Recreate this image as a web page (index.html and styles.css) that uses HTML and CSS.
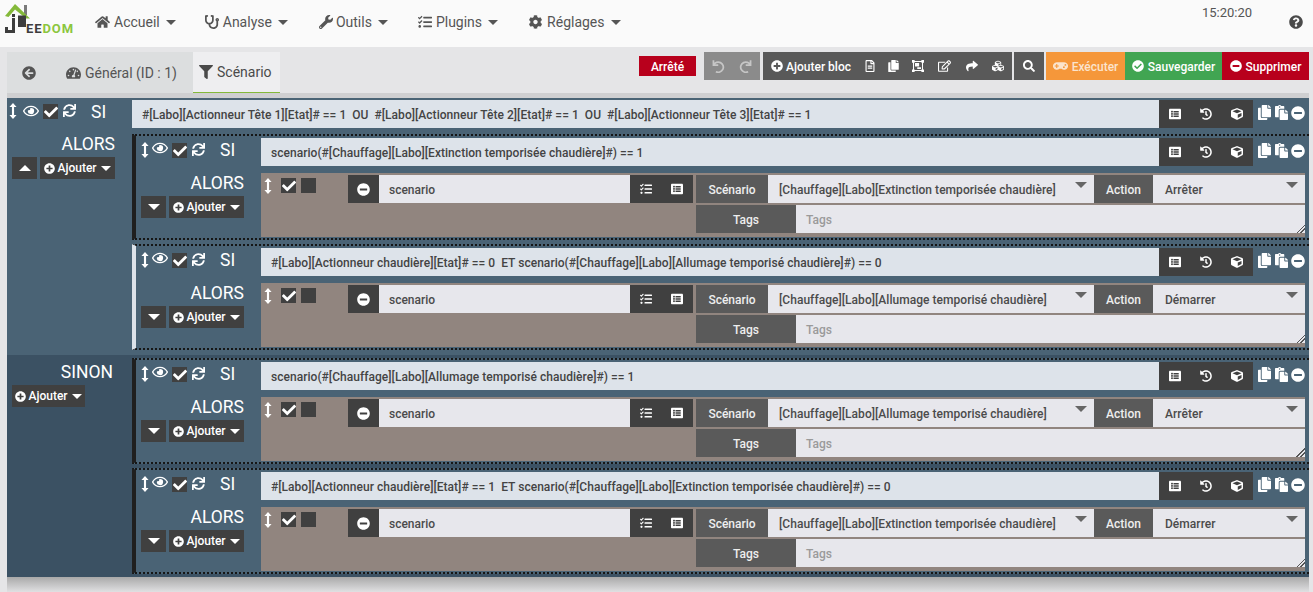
FILE: index.html
```html
<!DOCTYPE html>
<html lang="fr">
<head>
<meta charset="utf-8">
<title>Jeedom - Scénario</title>
<link rel="stylesheet" href="styles.css">
</head>
<body>
<svg class="defs" aria-hidden="true">
<symbol id="home" viewBox="0 0 576 512"><path d="M280.37 148.26L96 300.11V464a16 16 0 0 0 16 16l112.06-.29a16 16 0 0 0 15.92-16V368a16 16 0 0 1 16-16h64a16 16 0 0 1 16 16v95.64a16 16 0 0 0 16 16.05L464 480a16 16 0 0 0 16-16V300L295.67 148.26a12.19 12.19 0 0 0-15.3 0zM571.6 251.47L488 182.56V44.05a12 12 0 0 0-12-12h-56a12 12 0 0 0-12 12v72.61L318.47 43a48 48 0 0 0-61 0L4.34 251.47a12 12 0 0 0-1.6 16.9l25.5 31A12 12 0 0 0 45.15 301l235.22-193.74a12.19 12.19 0 0 1 15.3 0L530.9 301a12 12 0 0 0 16.9-1.6l25.5-31a12 12 0 0 0-1.7-16.93z"/></symbol>
<symbol id="steth" viewBox="0 0 512 512"><path d="M447.1 112c-34.2.5-62.3 28.4-63 62.6-.5 24.3 12.5 45.6 32 56.8V344c0 57.3-50.2 104-112 104-60 0-109.2-44.1-111.9-99.2C265 333.8 320 269.2 320 192V36.6c0-11.4-8.1-21.3-19.3-23.5L237.8.5c-13-2.6-25.6 5.8-28.2 18.8L206.4 35c-2.6 13 5.8 25.6 18.8 28.2l30.7 6.1v121.4c0 52.9-42.2 96.7-95.1 97.2-53.4.5-96.9-42.7-96.9-96V69.4l30.7-6.1c13-2.6 21.4-15.2 18.8-28.2l-3.1-15.7C107.7 6.4 95.1-2 82.1.6L19.3 13C8.1 15.3 0 25.1 0 36.6V192c0 77.3 55.1 142 128.1 156.8C130.7 439.2 208.6 512 304 512c97 0 176-75.4 176-168V231.4c19.1-11.1 32-31.7 32-55.4 0-35.7-29.2-64.5-64.9-64zm.9 80c-8.8 0-16-7.2-16-16s7.2-16 16-16 16 7.2 16 16-7.2 16-16 16z"/></symbol>
<symbol id="wrench" viewBox="0 0 512 512"><path d="M507.73 109.1c-2.24-9.03-13.54-12.09-20.12-5.51l-74.36 74.36-67.88-11.31-11.31-67.88 74.36-74.36c6.62-6.62 3.43-17.9-5.66-20.16-47.38-11.74-99.55.91-136.58 37.93-39.64 39.64-50.55 97.1-34.05 147.2L18.74 402.76c-24.99 24.99-24.99 65.51 0 90.5 24.99 24.99 65.51 24.99 90.5 0l213.21-213.21c50.12 16.71 107.47 5.68 147.37-34.22 37.07-37.07 49.7-89.32 37.91-136.73zM64 472c-13.25 0-24-10.75-24-24 0-13.26 10.75-24 24-24s24 10.74 24 24c0 13.25-10.75 24-24 24z"/></symbol>
<symbol id="tasks" viewBox="0 0 512 512"><path d="M139.61 35.5a12 12 0 0 0-17 0L58.93 98.81l-22.7-22.12a12 12 0 0 0-17 0L3.53 92.41a12 12 0 0 0 0 17l47.59 47.4a12.78 12.78 0 0 0 17.61 0l15.59-15.62L156.52 69a12.09 12.09 0 0 0 .09-17zm0 159.19a12 12 0 0 0-17 0l-63.68 63.72-22.7-22.1a12 12 0 0 0-17 0L3.53 252a12 12 0 0 0 0 17L51 316.5a12.77 12.77 0 0 0 17.6 0l15.7-15.69 72.2-72.22a12 12 0 0 0 .09-16.9zM64 368c-26.49 0-48.59 21.5-48.59 48S37.53 464 64 464a48 48 0 0 0 0-96zm432 16H208a16 16 0 0 0-16 16v32a16 16 0 0 0 16 16h288a16 16 0 0 0 16-16v-32a16 16 0 0 0-16-16zm0-320H208a16 16 0 0 0-16 16v32a16 16 0 0 0 16 16h288a16 16 0 0 0 16-16V80a16 16 0 0 0-16-16zm0 160H208a16 16 0 0 0-16 16v32a16 16 0 0 0 16 16h288a16 16 0 0 0 16-16v-32a16 16 0 0 0-16-16z"/></symbol>
<symbol id="cog" viewBox="0 0 512 512"><path d="M487.4 315.7l-42.6-24.6c4.3-23.2 4.3-47 0-70.2l42.6-24.6c4.9-2.8 7.1-8.6 5.5-14-11.1-35.6-30-67.8-54.7-94.6-3.8-4.1-10-5.1-14.8-2.3L380.8 110c-17.9-15.4-38.5-27.3-60.8-35.1V25.8c0-5.6-3.9-10.5-9.4-11.7-36.7-8.2-74.3-7.8-109.2 0-5.5 1.2-9.4 6.1-9.4 11.7V75c-22.2 7.9-42.8 19.8-60.8 35.1L88.7 85.5c-4.9-2.8-11-1.9-14.8 2.3-24.7 26.7-43.6 58.9-54.7 94.6-1.7 5.4.6 11.2 5.5 14L67.3 221c-4.3 23.2-4.3 47 0 70.2l-42.6 24.6c-4.9 2.8-7.1 8.6-5.5 14 11.1 35.6 30 67.8 54.7 94.6 3.8 4.1 10 5.1 14.8 2.3l42.6-24.6c17.9 15.4 38.5 27.3 60.8 35.1v49.2c0 5.6 3.9 10.5 9.4 11.7 36.7 8.2 74.3 7.8 109.2 0 5.5-1.2 9.4-6.1 9.4-11.7v-49.2c22.2-7.9 42.8-19.8 60.8-35.1l42.6 24.6c4.9 2.8 11 1.9 14.8-2.3 24.7-26.7 43.6-58.9 54.7-94.6 1.5-5.5-.7-11.3-5.6-14.1zM256 336c-44.1 0-80-35.9-80-80s35.9-80 80-80 80 35.9 80 80-35.9 80-80 80z"/></symbol>
<symbol id="question" viewBox="0 0 512 512"><path d="M504 256c0 136.997-111.043 248-248 248S8 392.997 8 256C8 119.083 119.043 8 256 8s248 111.083 248 248zM262.655 90c-54.497 0-89.255 22.957-116.549 63.758-3.536 5.286-2.353 12.415 2.715 16.258l34.699 26.31c5.205 3.947 12.621 3.008 16.665-2.122 17.864-22.658 30.113-35.797 57.303-35.797 20.429 0 45.698 13.148 45.698 32.958 0 14.976-12.363 22.667-32.534 33.976C247.128 238.528 216 254.941 216 296v4c0 6.627 5.373 12 12 12h56c6.627 0 12-5.373 12-12v-1.333c0-28.462 83.186-29.647 83.186-106.667 0-58.002-60.165-102-116.531-102zM256 338c-25.365 0-46 20.635-46 46 0 25.364 20.635 46 46 46s46-20.636 46-46c0-25.365-20.635-46-46-46z"/></symbol>
<symbol id="back" viewBox="0 0 512 512"><path d="M256 504C119 504 8 393 8 256S119 8 256 8s248 111 248 248-111 248-248 248zm28.9-143.6L209.4 288H392c13.3 0 24-10.7 24-24v-16c0-13.3-10.7-24-24-24H209.4l75.5-72.4c9.7-9.3 9.9-24.8.4-34.3l-11-10.9c-9.4-9.4-24.6-9.4-33.9 0L107.7 239c-9.4 9.4-9.4 24.6 0 33.9l132.7 132.7c9.4 9.4 24.6 9.4 33.9 0l11-10.9c9.5-9.5 9.3-25-.4-34.3z"/></symbol>
<symbol id="gauge" viewBox="0 0 576 512"><path d="M288 32C128.94 32 0 160.94 0 320c0 52.8 14.25 102.26 39.06 144.8 5.61 9.62 16.3 15.2 27.44 15.2h443c11.14 0 21.83-5.58 27.44-15.2C561.75 422.26 576 372.8 576 320c0-159.06-128.94-288-288-288zm0 64c14.71 0 26.58 10.13 30.32 23.65-1.11 2.26-2.64 4.23-3.45 6.67l-9.22 27.67c-5.13 3.49-10.97 6.01-17.64 6.01-17.67 0-32-14.33-32-32S270.33 96 288 96zM96 384c-17.67 0-32-14.33-32-32s14.33-32 32-32 32 14.33 32 32-14.33 32-32 32zm48-160c-17.67 0-32-14.33-32-32s14.33-32 32-32 32 14.33 32 32-14.33 32-32 32zm246.77-72.41l-61.33 184C343.13 347.33 352 364.54 352 384c0 11.72-3.38 22.55-8.88 32H232.88c-5.5-9.45-8.88-20.28-8.88-32 0-33.94 26.5-61.43 59.9-63.59l61.34-184.01c4.17-12.56 17.73-19.45 30.36-15.17 12.57 4.19 19.35 17.79 15.17 30.36zm14.66 57.2l15.52-46.55c3.47-1.29 7.13-2.23 11.05-2.23 17.67 0 32 14.33 32 32s-14.33 32-32 32c-11.38-.01-20.89-6.28-26.57-15.22zM480 384c-17.67 0-32-14.33-32-32s14.33-32 32-32 32 14.33 32 32-14.33 32-32 32z"/></symbol>
<symbol id="filter" viewBox="0 0 512 512"><path d="M487.976 0H24.028C2.71 0-8.047 25.866 7.058 40.971L192 225.941V432c0 7.831 3.821 15.17 10.237 19.662l80 55.98C298.02 518.69 320 507.493 320 487.98V225.941l184.947-184.97C520.021 25.896 509.338 0 487.976 0z"/></symbol>
<symbol id="undo" viewBox="0 0 16 16"><path fill="none" stroke="currentColor" stroke-width="2" d="M2.800 1.500v5.500h5.500M3 7a5.800 5.800 0 1 1 2.600 7.500"/></symbol>
<symbol id="redo" viewBox="0 0 16 16"><path fill="none" stroke="currentColor" stroke-width="2" d="M13.200 1.500v5.500h-5.500M13 7a5.800 5.800 0 1 0-2.600 7.500"/></symbol>
<symbol id="plus" viewBox="0 0 512 512"><path d="M256 8C119 8 8 119 8 256s111 248 248 248 248-111 248-248S393 8 256 8zm144 276c0 6.6-5.4 12-12 12h-92v92c0 6.6-5.4 12-12 12h-56c-6.6 0-12-5.4-12-12v-92h-92c-6.6 0-12-5.4-12-12v-56c0-6.6 5.4-12 12-12h92v-92c0-6.6 5.4-12 12-12h56c6.6 0 12 5.4 12 12v92h92c6.6 0 12 5.4 12 12v56z"/></symbol>
<symbol id="minus" viewBox="0 0 512 512"><path d="M256 8C119 8 8 119 8 256s111 248 248 248 248-111 248-248S393 8 256 8zM124 296c-6.6 0-12-5.4-12-12v-56c0-6.6 5.4-12 12-12h264c6.6 0 12 5.4 12 12v56c0 6.6-5.4 12-12 12H124z"/></symbol>
<symbol id="okcircle" viewBox="0 0 512 512"><path d="M504 256c0 136.967-111.033 248-248 248S8 392.967 8 256 119.033 8 256 8s248 111.033 248 248zM227.314 387.314l184-184c6.248-6.248 6.248-16.379 0-22.627l-22.627-22.627c-6.248-6.249-16.379-6.249-22.628 0L216 308.118l-70.059-70.059c-6.248-6.248-16.379-6.248-22.628 0l-22.627 22.627c-6.248 6.248-6.248 16.379 0 22.627l104 104c6.249 6.249 16.379 6.249 22.628.001z"/></symbol>
<symbol id="file" viewBox="0 0 384 512"><path d="M288 248v28c0 6.6-5.4 12-12 12H108c-6.6 0-12-5.4-12-12v-28c0-6.6 5.4-12 12-12h168c6.6 0 12 5.4 12 12zm-12 72H108c-6.6 0-12 5.4-12 12v28c0 6.6 5.4 12 12 12h168c6.6 0 12-5.4 12-12v-28c0-6.6-5.4-12-12-12zm108-188.1V464c0 26.5-21.5 48-48 48H48c-26.5 0-48-21.5-48-48V48C0 21.5 21.5 0 48 0h204.1C264.8 0 277 5.1 286 14.1L369.9 98c9 8.9 14.1 21.2 14.1 33.9zm-128-80V128h76.1L256 51.9zM336 464V176H232c-13.3 0-24-10.7-24-24V48H48v416h288z"/></symbol>
<symbol id="copy" viewBox="0 0 448 512"><path d="M320 448v40c0 13.255-10.745 24-24 24H24c-13.255 0-24-10.745-24-24V120c0-13.255 10.745-24 24-24h72v296c0 30.879 25.121 56 56 56h168zm0-344V0H152c-13.255 0-24 10.745-24 24v368c0 13.255 10.745 24 24 24h272c13.255 0 24-10.745 24-24V128H344c-13.2 0-24-10.8-24-24zm120.971-31.029L375.029 7.029A24 24 0 0 0 358.059 0H352v96h96v-6.059a24 24 0 0 0-7.029-16.97z"/></symbol>
<symbol id="paste" viewBox="0 0 448 512"><path d="M128 184c0-30.879 25.122-56 56-56h136V56c0-13.255-10.745-24-24-24h-80.61C204.306 12.89 183.637 0 160 0s-44.306 12.89-55.39 32H24C10.745 32 0 42.745 0 56v336c0 13.255 10.745 24 24 24h104V184zm32-144c13.255 0 24 10.745 24 24s-10.745 24-24 24-24-10.745-24-24 10.745-24 24-24zm184 248h104v200c0 13.255-10.745 24-24 24H184c-13.255 0-24-10.745-24-24V184c0-13.255 10.745-24 24-24h136v104c0 13.2 10.8 24 24 24zm104-38.059V256h-96v-96h6.059a24 24 0 0 1 16.97 7.029l65.941 65.941a24.002 24.002 0 0 1 7.03 16.971z"/></symbol>
<symbol id="group" viewBox="0 0 16 16"><path d="M0 0h3.500v3.500H0zM12.500 0H16v3.500h-3.500zM0 12.500h3.500V16H0zM12.500 12.500H16V16h-3.500z"/><path fill="none" stroke="currentColor" stroke-width="1.400" d="M2 2h12v12H2z"/><path d="M4 4h5.500v4.500H4zM7 9.500h5V12H7z"/></symbol>
<symbol id="edit" viewBox="0 0 576 512"><path d="M402.3 344.9l32-32c5-5 13.7-1.500 13.7 5.700V464c0 26.500-21.500 48-48 48H48c-26.500 0-48-21.500-48-48V112c0-26.500 21.500-48 48-48h273.500c7.100 0 10.700 8.600 5.700 13.700l-32 32c-1.500 1.500-3.500 2.300-5.700 2.300H48v352h352V350.500c0-2.100.8-4.100 2.300-5.600zm156.600-201.800L296.300 405.700l-90.400 10c-26.200 2.900-48.500-19.200-45.600-45.600l10-90.400L432.900 17.100c22.900-22.900 59.900-22.900 82.700 0l43.200 43.200c22.900 22.900 22.900 60 .1 82.800zM460.100 174L402 115.900 216.200 301.800l-7.300 65.300 65.300-7.300L460.100 174zm64.800-79.700l-43.200-43.200c-4.100-4.100-10.800-4.100-14.800 0L436 82l58.100 58.100 30.900-30.900c4-4.200 4-10.800-.1-14.900z"/></symbol>
<symbol id="share" viewBox="0 0 512 512"><path d="M503.691 189.836L327.687 37.851C312.281 24.546 288 35.347 288 56.015v80.053C127.371 137.907 0 170.100 0 322.326c0 61.441 39.581 122.309 83.333 154.132 13.653 9.931 33.111-2.533 28.077-18.631C66.066 312.814 132.917 274.316 288 272.085V360c0 20.700 24.300 31.453 39.687 18.164l176.004-152c11.071-9.562 11.086-26.753 0-36.328z"/></symbol>
<symbol id="cubes" viewBox="0 0 512 512"><path d="M488.600 250.200L392 214V105.500c0-15-9.300-28.400-23.400-33.700l-100-37.500c-8.100-3.100-17.100-3.100-25.300 0l-100 37.500c-14.100 5.300-23.400 18.700-23.400 33.700V214l-96.600 36.200C9.300 255.500 0 268.900 0 283.900V394c0 13.600 7.700 26.100 19.900 32.200l100 50c10.100 5.100 22.100 5.100 32.200 0l103.900-52 103.900 52c10.100 5.100 22.100 5.100 32.200 0l100-50c12.200-6.100 19.900-18.600 19.900-32.200V283.900c0-15-9.300-28.400-23.400-33.700zM358 214.800l-85 31.900v-68.200l85-37v73.300zM154 104.100l102-38.200 102 38.200v.6l-102 41.400-102-41.400v-.6zm84 291.100l-85 42.500v-79.100l85-38.800v75.400zm0-112l-102 41.400-102-41.400v-.6l102-38.200 102 38.200v.6zm240 112l-85 42.500v-79.100l85-38.800v75.400zm0-112l-102 41.400-102-41.400v-.6l102-38.200 102 38.200v.6z"/></symbol>
<symbol id="search" viewBox="0 0 512 512"><path d="M505 442.700L405.300 343c-4.500-4.500-10.600-7-17-7H372c27.600-35.300 44-79.700 44-128C416 93.100 322.900 0 208 0S0 93.100 0 208s93.100 208 208 208c48.300 0 92.700-16.400 128-44v16.300c0 6.400 2.500 12.500 7 17l99.700 99.700c9.400 9.400 24.600 9.400 33.900 0l28.300-28.300c9.400-9.400 9.400-24.600.1-34zM208 336c-70.700 0-128-57.200-128-128 0-70.700 57.200-128 128-128 70.700 0 128 57.200 128 128 0 70.700-57.200 128-128 128z"/></symbol>
<symbol id="gamepad" viewBox="0 0 640 512"><path d="M480.070 96H160a160 160 0 1 0 114.240 272h91.520A160 160 0 1 0 480.070 96zM248 268a12 12 0 0 1-12 12h-52v52a12 12 0 0 1-12 12h-24a12 12 0 0 1-12-12v-52H84a12 12 0 0 1-12-12v-24a12 12 0 0 1 12-12h52v-52a12 12 0 0 1 12-12h24a12 12 0 0 1 12 12v52h52a12 12 0 0 1 12 12zm216 76a40 40 0 1 1 40-40 40 40 0 0 1-40 40zm64-96a40 40 0 1 1 40-40 40 40 0 0 1-40 40z"/></symbol>
<symbol id="grip" viewBox="0 0 8 18"><path d="M4 0l4 4.500H5.200v9H8L4 18 0 13.500h2.800v-9H0z"/></symbol>
<symbol id="eye" viewBox="0 0 576 512"><path d="M288 144a110.940 110.940 0 0 0-31.240 5 55.400 55.400 0 0 1 7.240 27 56 56 0 0 1-56 56 55.400 55.400 0 0 1-27-7.240A111.710 111.710 0 1 0 288 144zm284.520 97.400C518.290 135.590 410.930 64 288 64S57.680 135.640 3.480 241.410a32.350 32.350 0 0 0 0 29.190C57.710 376.410 165.070 448 288 448s230.320-71.640 284.520-177.410a32.350 32.350 0 0 0 0-29.190zM288 400c-98.650 0-189.090-55-237.930-144C98.910 167 189.340 112 288 112s189.090 55 237.930 144C477.100 345 386.660 400 288 400z"/></symbol>
<symbol id="check" viewBox="0 0 512 512"><path d="M173.898 439.404l-166.400-166.400c-9.997-9.997-9.997-26.206 0-36.204l36.203-36.204c9.997-9.998 26.207-9.998 36.204 0L192 312.690 432.095 72.596c9.997-9.997 26.207-9.997 36.204 0l36.203 36.204c9.997 9.997 9.997 26.206 0 36.204l-294.400 294.401c-9.998 9.997-26.207 9.997-36.204-.001z"/></symbol>
<symbol id="sync" viewBox="0 0 512 512"><path d="M440.650 12.570l4 82.770A247.160 247.160 0 0 0 255.830 8C134.730 8 33.910 94.920 12.290 209.820A12 12 0 0 0 24.090 224h49.050a12 12 0 0 0 11.670-9.260 175.910 175.910 0 0 1 317-56.940l-101.460-4.860a12 12 0 0 0-12.570 12v47.410a12 12 0 0 0 12 12H500a12 12 0 0 0 12-12V12a12 12 0 0 0-12-12h-47.370a12 12 0 0 0-11.980 12.570zM255.830 432a175.610 175.610 0 0 1-146-77.800l101.800 4.870a12 12 0 0 0 12.570-12v-47.400a12 12 0 0 0-12-12H12a12 12 0 0 0-12 12V500a12 12 0 0 0 12 12h47.350a12 12 0 0 0 12-12.600l-4.150-82.570A247.170 247.170 0 0 0 255.830 504c121.110 0 221.930-86.920 243.550-201.820a12 12 0 0 0-11.800-14.180h-49.050a12 12 0 0 0-11.670 9.260A175.860 175.860 0 0 1 255.830 432z"/></symbol>
<symbol id="listalt" viewBox="0 0 512 512"><path d="M464 480H48c-26.510 0-48-21.490-48-48V80c0-26.510 21.490-48 48-48h416c26.510 0 48 21.490 48 48v352c0 26.510-21.490 48-48 48zM128 120c-22.091 0-40 17.909-40 40s17.909 40 40 40 40-17.909 40-40-17.909-40-40-40zm0 96c-22.091 0-40 17.909-40 40s17.909 40 40 40 40-17.909 40-40-17.909-40-40-40zm0 96c-22.091 0-40 17.909-40 40s17.909 40 40 40 40-17.909 40-40-17.909-40-40-40zm288-136v-32c0-6.627-5.373-12-12-12H204c-6.627 0-12 5.373-12 12v32c0 6.627 5.373 12 12 12h200c6.627 0 12-5.373 12-12zm0 96v-32c0-6.627-5.373-12-12-12H204c-6.627 0-12 5.373-12 12v32c0 6.627 5.373 12 12 12h200c6.627 0 12-5.373 12-12zm0 96v-32c0-6.627-5.373-12-12-12H204c-6.627 0-12 5.373-12 12v32c0 6.627 5.373 12 12 12h200c6.627 0 12-5.373 12-12z"/></symbol>
<symbol id="history" viewBox="0 0 512 512"><path d="M504 255.531c.253 136.640-111.180 248.372-247.820 248.468-59.015.042-113.223-20.530-155.822-54.911-11.077-8.940-11.905-25.541-1.839-35.607l11.267-11.267c8.609-8.609 22.353-9.551 31.891-1.984C173.062 425.135 212.781 440 256 440c101.705 0 184-82.311 184-184 0-101.705-82.311-184-184-184-48.814 0-93.149 18.969-126.068 49.932l50.754 50.754c10.080 10.080 2.941 27.314-11.313 27.314H24c-8.837 0-16-7.163-16-16V38.627c0-14.254 17.234-21.393 27.314-11.314l49.372 49.372C129.209 34.136 189.552 8 256 8c136.810 0 247.747 110.780 248 247.531zm-180.912 78.784l9.823-12.630c8.138-10.463 6.253-25.542-4.210-33.679L288 256.349V152c0-13.255-10.745-24-24-24h-16c-13.255 0-24 10.745-24 24v135.651l65.409 50.874c10.463 8.137 25.541 6.253 33.679-4.210z"/></symbol>
<symbol id="cube" viewBox="0 0 512 512"><path d="M239.100 6.300l-208 78c-18.700 7-31.100 25-31.100 45v225.100c0 18.200 10.300 34.800 26.500 42.900l208 104c13.500 6.800 29.400 6.800 42.900 0l208-104c16.300-8.100 26.500-24.800 26.500-42.900V129.300c0-20-12.400-37.900-31.100-44.900l-208-78C262 2.200 250 2.200 239.100 6.300zM256 68.400l192 72v1.100l-192 78-192-78v-1.100l192-72zm32 356V275.500l160-65v133.900l-160 80z"/></symbol>
</svg>

<header class="nav">
  <a class="logo">
    <svg class="logo-mark" viewBox="0 0 30 34" aria-hidden="true">
      <path class="logo-chim" d="M24 5h3v10h-3z"/>
      <path class="logo-green" d="M5 16L15 4l15 14.500h-4L15 9.500 8.500 17z"/>
      <path class="logo-dark" d="M18 15.500h8V27h-8z"/>
      <path class="logo-dark" d="M12 14h3v3h-3zM12 18h3v15H5v-6h3v3h4z"/>
    </svg>
    <span class="logo-text"><span class="logo-ee">EE</span><span class="logo-dom">DOM</span></span>
  </a>
  <nav class="menu">
    <a class="menu-item m-home"><svg class="i i-nav"><use href="#home"/></svg>Accueil<span class="caret caret-nav"></span></a>
    <a class="menu-item m-ana"><svg class="i i-nav i-nav-s"><use href="#steth"/></svg>Analyse<span class="caret caret-nav"></span></a>
    <a class="menu-item m-out"><svg class="i i-nav i-nav-w"><use href="#wrench"/></svg>Outils<span class="caret caret-nav"></span></a>
    <a class="menu-item m-plu"><svg class="i i-nav i-nav-s"><use href="#tasks"/></svg>Plugins<span class="caret caret-nav"></span></a>
    <a class="menu-item"><svg class="i i-nav"><use href="#cog"/></svg>Réglages<span class="caret caret-nav"></span></a>
  </nav>
  <div class="nav-right">
    <span class="clock">15:20:20</span>
    <svg class="i i-help"><use href="#question"/></svg>
  </div>
</header>

<main class="main">
  <div class="tabbar">
    <div class="tabs-left">
      <a class="tab-back"><svg class="i i-tab"><use href="#back"/></svg></a>
      <a class="tab"><svg class="i i-gauge"><use href="#gauge"/></svg>Général (ID : 1)</a>
    </div>
    <a class="tab tab-active"><svg class="i i-tab i-filter"><use href="#filter"/></svg>Scénario</a>
    <div class="toolbar">
      <span class="state">Arrêté</span>
      <div class="tg tg-undo">
        <svg class="i i-undo"><use href="#undo"/></svg>
        <svg class="i i-undo"><use href="#redo"/></svg>
      </div>
      <div class="tg tg-main">
        <span class="tb-add"><svg class="i i-tb"><use href="#plus"/></svg><span class="tb-text">Ajouter bloc</span></span>
        <svg class="i i-tb i-file"><use href="#file"/></svg>
        <svg class="i i-tb i-copy"><use href="#copy"/></svg>
        <svg class="i i-tb"><use href="#group"/></svg>
        <svg class="i i-tb i-edit"><use href="#edit"/></svg>
        <svg class="i i-tb i-share"><use href="#share"/></svg>
        <svg class="i i-tb i-cubes"><use href="#cubes"/></svg>
      </div>
      <div class="tg tg-search"><svg class="i i-tb"><use href="#search"/></svg></div>
      <div class="tb-actions">
        <a class="act act-run"><svg class="i i-game"><use href="#gamepad"/></svg><span class="tb-text">Exécuter</span></a>
        <a class="act act-save"><svg class="i i-tb"><use href="#okcircle"/></svg><span class="tb-text">Sauvegarder</span></a>
        <a class="act act-del"><svg class="i i-tb"><use href="#minus"/></svg><span class="tb-text">Supprimer</span></a>
      </div>
    </div>
  </div>

  <section class="panel">
    <div class="row row-outer">
      <div class="head head-outer">
        <svg class="i i-grip"><use href="#grip"/></svg>
        <svg class="i i-eye"><use href="#eye"/></svg>
        <span class="chk"><svg class="i i-check"><use href="#check"/></svg></span>
        <svg class="i i-sync"><use href="#sync"/></svg>
        <span class="si">SI</span>
      </div>
      <div class="cond">#[Labo][Actionneur Tête 1][Etat]# == 1  OU  #[Labo][Actionneur Tête 2][Etat]# == 1  OU  #[Labo][Actionneur Tête 3][Etat]# == 1</div>
      <div class="addon3"><svg class="i i-add"><use href="#listalt"/></svg><svg class="i i-add"><use href="#history"/></svg><svg class="i i-add"><use href="#cube"/></svg></div>
      <div class="tools"><svg class="i i-tool"><use href="#copy"/></svg><svg class="i i-tool i-paste"><use href="#paste"/></svg><svg class="i i-rm"><use href="#minus"/></svg></div>
    </div>

    <div class="sec sec-alors">
      <div class="sec-side">
        <div class="word word-outer">ALORS</div>
        <div class="btns btns-outer">
          <a class="btn btn-tog"><span class="caret caret-up"></span></a>
          <a class="btn btn-add"><svg class="i i-plus"><use href="#plus"/></svg>Ajouter<span class="caret caret-w"></span></a>
        </div>
      </div>
      <div class="sec-body">

        <article class="block">
          <div class="row">
            <div class="head">
              <svg class="i i-grip"><use href="#grip"/></svg>
              <svg class="i i-eye"><use href="#eye"/></svg>
              <span class="chk"><svg class="i i-check"><use href="#check"/></svg></span>
              <svg class="i i-sync"><use href="#sync"/></svg>
              <span class="si">SI</span>
            </div>
            <div class="cond">scenario(#[Chauffage][Labo][Extinction temporisée chaudière]#) == 1</div>
            <div class="addon3"><svg class="i i-add"><use href="#listalt"/></svg><svg class="i i-add"><use href="#history"/></svg><svg class="i i-add"><use href="#cube"/></svg></div>
            <div class="tools"><svg class="i i-tool"><use href="#copy"/></svg><svg class="i i-tool i-paste"><use href="#paste"/></svg><svg class="i i-rm"><use href="#minus"/></svg></div>
          </div>
          <div class="row-then">
            <div class="then-side">
              <div class="word">ALORS</div>
              <div class="btns">
                <a class="btn btn-tog"><span class="caret caret-dn"></span></a>
                <a class="btn btn-add"><svg class="i i-plus"><use href="#plus"/></svg>Ajouter<span class="caret caret-w"></span></a>
              </div>
            </div>
            <div class="action">
              <div class="a-row">
                <div class="a-left">
                  <svg class="i i-grip i-grip-a"><use href="#grip"/></svg>
                  <span class="chk chk-a"><svg class="i i-check"><use href="#check"/></svg></span>
                  <span class="chk chk-off"></span>
                </div>
                <a class="a-rm"><svg class="i i-rm-a"><use href="#minus"/></svg></a>
                <div class="a-name">scenario</div>
                <div class="addon2"><svg class="i i-add"><use href="#tasks"/></svg><svg class="i i-add"><use href="#listalt"/></svg></div>
                <div class="lbl lbl-sc">Scénario</div>
                <div class="sel sel-sc">[Chauffage][Labo][Extinction temporisée chaudière]<span class="caret caret-sel"></span></div>
                <div class="lbl lbl-ac">Action</div>
                <div class="sel sel-ac">Arrêter<span class="caret caret-sel"></span></div>
              </div>
              <div class="a-row a-row2">
                <div class="lbl lbl-tags">Tags</div>
                <div class="tags">Tags<span class="resize"></span></div>
              </div>
            </div>
          </div>
        </article>

        <article class="block block-sel">
          <div class="row">
            <div class="head">
              <svg class="i i-grip"><use href="#grip"/></svg>
              <svg class="i i-eye"><use href="#eye"/></svg>
              <span class="chk"><svg class="i i-check"><use href="#check"/></svg></span>
              <svg class="i i-sync"><use href="#sync"/></svg>
              <span class="si">SI</span>
            </div>
            <div class="cond">#[Labo][Actionneur chaudière][Etat]# == 0  ET scenario(#[Chauffage][Labo][Allumage temporisé chaudière]#) == 0</div>
            <div class="addon3"><svg class="i i-add"><use href="#listalt"/></svg><svg class="i i-add"><use href="#history"/></svg><svg class="i i-add"><use href="#cube"/></svg></div>
            <div class="tools"><svg class="i i-tool"><use href="#copy"/></svg><svg class="i i-tool i-paste"><use href="#paste"/></svg><svg class="i i-rm"><use href="#minus"/></svg></div>
          </div>
          <div class="row-then">
            <div class="then-side">
              <div class="word">ALORS</div>
              <div class="btns">
                <a class="btn btn-tog"><span class="caret caret-dn"></span></a>
                <a class="btn btn-add"><svg class="i i-plus"><use href="#plus"/></svg>Ajouter<span class="caret caret-w"></span></a>
              </div>
            </div>
            <div class="action">
              <div class="a-row">
                <div class="a-left">
                  <svg class="i i-grip i-grip-a"><use href="#grip"/></svg>
                  <span class="chk chk-a"><svg class="i i-check"><use href="#check"/></svg></span>
                  <span class="chk chk-off"></span>
                </div>
                <a class="a-rm"><svg class="i i-rm-a"><use href="#minus"/></svg></a>
                <div class="a-name">scenario</div>
                <div class="addon2"><svg class="i i-add"><use href="#tasks"/></svg><svg class="i i-add"><use href="#listalt"/></svg></div>
                <div class="lbl lbl-sc">Scénario</div>
                <div class="sel sel-sc">[Chauffage][Labo][Allumage temporisé chaudière]<span class="caret caret-sel"></span></div>
                <div class="lbl lbl-ac">Action</div>
                <div class="sel sel-ac">Démarrer<span class="caret caret-sel"></span></div>
              </div>
              <div class="a-row a-row2">
                <div class="lbl lbl-tags">Tags</div>
                <div class="tags">Tags<span class="resize"></span></div>
              </div>
            </div>
          </div>
        </article>

      </div>
    </div>

    <div class="sec sec-sinon">
      <div class="sec-side">
        <div class="word word-sinon">SINON</div>
        <div class="btns btns-sinon">
          <a class="btn btn-add btn-add-s"><svg class="i i-plus"><use href="#plus"/></svg>Ajouter<span class="caret caret-w"></span></a>
        </div>
      </div>
      <div class="sec-body">

        <article class="block">
          <div class="row">
            <div class="head">
              <svg class="i i-grip"><use href="#grip"/></svg>
              <svg class="i i-eye"><use href="#eye"/></svg>
              <span class="chk"><svg class="i i-check"><use href="#check"/></svg></span>
              <svg class="i i-sync"><use href="#sync"/></svg>
              <span class="si">SI</span>
            </div>
            <div class="cond">scenario(#[Chauffage][Labo][Allumage temporisé chaudière]#) == 1</div>
            <div class="addon3"><svg class="i i-add"><use href="#listalt"/></svg><svg class="i i-add"><use href="#history"/></svg><svg class="i i-add"><use href="#cube"/></svg></div>
            <div class="tools"><svg class="i i-tool"><use href="#copy"/></svg><svg class="i i-tool i-paste"><use href="#paste"/></svg><svg class="i i-rm"><use href="#minus"/></svg></div>
          </div>
          <div class="row-then">
            <div class="then-side">
              <div class="word">ALORS</div>
              <div class="btns">
                <a class="btn btn-tog"><span class="caret caret-dn"></span></a>
                <a class="btn btn-add"><svg class="i i-plus"><use href="#plus"/></svg>Ajouter<span class="caret caret-w"></span></a>
              </div>
            </div>
            <div class="action">
              <div class="a-row">
                <div class="a-left">
                  <svg class="i i-grip i-grip-a"><use href="#grip"/></svg>
                  <span class="chk chk-a"><svg class="i i-check"><use href="#check"/></svg></span>
                  <span class="chk chk-off"></span>
                </div>
                <a class="a-rm"><svg class="i i-rm-a"><use href="#minus"/></svg></a>
                <div class="a-name">scenario</div>
                <div class="addon2"><svg class="i i-add"><use href="#tasks"/></svg><svg class="i i-add"><use href="#listalt"/></svg></div>
                <div class="lbl lbl-sc">Scénario</div>
                <div class="sel sel-sc">[Chauffage][Labo][Allumage temporisé chaudière]<span class="caret caret-sel"></span></div>
                <div class="lbl lbl-ac">Action</div>
                <div class="sel sel-ac">Arrêter<span class="caret caret-sel"></span></div>
              </div>
              <div class="a-row a-row2">
                <div class="lbl lbl-tags">Tags</div>
                <div class="tags">Tags<span class="resize"></span></div>
              </div>
            </div>
          </div>
        </article>

        <article class="block">
          <div class="row">
            <div class="head">
              <svg class="i i-grip"><use href="#grip"/></svg>
              <svg class="i i-eye"><use href="#eye"/></svg>
              <span class="chk"><svg class="i i-check"><use href="#check"/></svg></span>
              <svg class="i i-sync"><use href="#sync"/></svg>
              <span class="si">SI</span>
            </div>
            <div class="cond">#[Labo][Actionneur chaudière][Etat]# == 1  ET scenario(#[Chauffage][Labo][Extinction temporisée chaudière]#) == 0</div>
            <div class="addon3"><svg class="i i-add"><use href="#listalt"/></svg><svg class="i i-add"><use href="#history"/></svg><svg class="i i-add"><use href="#cube"/></svg></div>
            <div class="tools"><svg class="i i-tool"><use href="#copy"/></svg><svg class="i i-tool i-paste"><use href="#paste"/></svg><svg class="i i-rm"><use href="#minus"/></svg></div>
          </div>
          <div class="row-then">
            <div class="then-side">
              <div class="word">ALORS</div>
              <div class="btns">
                <a class="btn btn-tog"><span class="caret caret-dn"></span></a>
                <a class="btn btn-add"><svg class="i i-plus"><use href="#plus"/></svg>Ajouter<span class="caret caret-w"></span></a>
              </div>
            </div>
            <div class="action">
              <div class="a-row">
                <div class="a-left">
                  <svg class="i i-grip i-grip-a"><use href="#grip"/></svg>
                  <span class="chk chk-a"><svg class="i i-check"><use href="#check"/></svg></span>
                  <span class="chk chk-off"></span>
                </div>
                <a class="a-rm"><svg class="i i-rm-a"><use href="#minus"/></svg></a>
                <div class="a-name">scenario</div>
                <div class="addon2"><svg class="i i-add"><use href="#tasks"/></svg><svg class="i i-add"><use href="#listalt"/></svg></div>
                <div class="lbl lbl-sc">Scénario</div>
                <div class="sel sel-sc">[Chauffage][Labo][Extinction temporisée chaudière]<span class="caret caret-sel"></span></div>
                <div class="lbl lbl-ac">Action</div>
                <div class="sel sel-ac">Démarrer<span class="caret caret-sel"></span></div>
              </div>
              <div class="a-row a-row2">
                <div class="lbl lbl-tags">Tags</div>
                <div class="tags">Tags<span class="resize"></span></div>
              </div>
            </div>
          </div>
        </article>

      </div>
    </div>
  </section>
  <div class="shade"></div>
</main>
</body>
</html>
```

FILE: styles.css
```css
* { box-sizing: border-box; }
html, body { height: 100%; }
body {
  margin: 0;
  overflow: hidden;
  background: #e5e5e7;
  font-family: Roboto, "Liberation Sans", sans-serif;
  font-size: 12px;
  color: #4b4b4b;
}
.defs { display: none; }
.i { display: block; fill: currentColor; flex: none; }

/* top navigation */
.nav {
  height: 47px;
  background: #fafafa;
  display: flex;
  align-items: flex-start;
  color: #555;
}
.logo {
  width: 95px;
  height: 47px;
  display: flex;
  align-items: flex-start;
}
.logo-mark { width: 30px; height: 34px; flex: none; }
.logo-dark { fill: #3d3d3d; }
.logo-chim { fill: #7a7a7a; }
.logo-green { fill: #84b93a; }
.logo-text {
  margin: 22px 0 0 -4px;
  font-size: 13px;
  line-height: 14px;
  font-weight: 700;
  letter-spacing: .9px;
}
.logo-ee { color: #3d3d3d; }
.logo-dom { color: #8cc63f; }
.menu { display: flex; height: 44px; }
.menu-item {
  display: flex;
  align-items: center;
  font-size: 14px;
  color: #555;
}
.m-home { margin-right: 29px; }
.m-ana { margin-right: 31px; }
.m-out { margin-right: 30px; }
.m-plu { margin-right: 30px; }
.i-nav { width: 15px; height: 14px; margin-right: 4px; }
.i-nav-s { width: 14px; }
.i-nav-w { width: 14px; margin-right: 3px; }
.nav-right {
  margin-left: auto;
  width: 111px;
  display: flex;
  flex-direction: column;
  padding-top: 5px;
}
.clock { font-size: 13px; line-height: 15px; color: #555; }
.i-help { width: 14px; height: 14px; margin: -5px 0 0 87px; color: #4a4a4a; }

.caret { display: inline-block; width: 0; height: 0; border-left: 5px solid transparent; border-right: 5px solid transparent; flex: none; }
.caret-nav { border-top: 5px solid #555; margin-left: 6px; }
.caret-w { border-top: 5px solid #fff; margin-left: 4px; }
.caret-dn { border-left-width: 6px; border-right-width: 6px; border-top: 6px solid #fff; }
.caret-up { border-left-width: 6px; border-right-width: 6px; border-bottom: 6px solid #fff; }
.caret-sel { border-left-width: 6px; border-right-width: 6px; border-top: 6px solid #666; position: absolute; right: 7px; top: 7px; }

/* tabs + toolbar */
.main { padding: 5px 4px 0 7px; }
.tabbar {
  height: 46px;
  display: flex;
  border-bottom: 5px solid #cfcfd1;
  background: #e5e5e7;
}
.tabs-left {
  width: 186px;
  background: #dcdedf;
  display: flex;
  align-items: center;
  padding-left: 15px;
  color: #555;
}
.tab-back { width: 44px; }
.tab {
  display: flex;
  align-items: center;
  font-size: 14px;
  color: #555;
}
.tab-active {
  width: 87px;
  padding-left: 6px;
  background: #eeeef0;
  border-bottom: 1px solid #84b93a;
  color: #4a4a4a;
}
.i-tab { width: 14px; height: 14px; margin-right: 4px; }
.i-filter { margin-right: 4px; }
.i-gauge { width: 15px; height: 14px; margin-right: 4px; }

.toolbar {
  margin-left: auto;
  height: 28px;
  display: flex;
  font-size: 12px;
  color: #fff;
  font-weight: 500;
}
.state {
  width: 57px;
  height: 20px;
  margin: 4px 8px 0 0;
  background: #b8001c;
  text-align: center;
  line-height: 22px;
}
.tg { display: flex; align-items: center; height: 28px; margin-right: 3px; }
.tg-undo { width: 56px; padding-left: 7px; gap: 14px; background: #8b8b8b; color: #c6c6c6; }
.i-undo { width: 14px; height: 14px; }
.tg-main { width: 249px; padding-left: 8px; gap: 13px; background: #595959; margin-right: 2px; }
.tg-search { width: 30px; justify-content: center; background: #595959; margin-right: 2px; }
.i-tb { width: 12px; height: 12px; }
.i-file { width: 10px; }
.i-copy { width: 11px; }
.i-edit { width: 13px; margin-left: 1px; }
.i-share { margin-left: 2px; }
.i-cubes { margin-left: 1px; }
.tb-add { display: flex; align-items: center; gap: 3px; margin-right: 1px; }
.tb-text { padding-top: 2px; }
.tb-actions { display: flex; }
.act { height: 28px; display: flex; align-items: center; justify-content: center; gap: 4px; }
.act-run { width: 79px; background: #f5973a; color: #fbe4cd; }
.act-save { width: 97px; background: #41a552; }
.act-del { width: 87px; background: #b8001c; }
.i-game { width: 15px; height: 12px; }

/* scenario panel */
.panel { background: #4a6375; color: #fff; height: 479px; }
.row { display: flex; height: 28px; }
.row-outer { padding-top: 2px; height: 30px; margin-bottom: 4px; }
.head {
  width: 125px;
  display: flex;
  align-items: flex-start;
  padding: 5px 0 0 5px;
  flex: none;
}
.head-outer { padding: 4px 0 0 2px; }
.i-grip { width: 8px; height: 16px; margin: -1px 2px 0 0; }
.i-eye { width: 16px; height: 16px; margin: -3px 0 0 1px; }
.head-outer .i-eye { margin: -1px 0 0 4px; }
.chk {
  width: 15px;
  height: 15px;
  background: #404040;
  margin: 0 0 0 4px;
  display: flex;
  align-items: center;
  justify-content: center;
  flex: none;
}
.i-check { width: 14px; height: 14px; }
.i-sync { width: 13px; height: 13px; margin: 0 0 0 5px; }
.si { font-size: 17.500px; line-height: 20px; margin: -3px 0 0 15px; }
.head-outer .si { margin-top: -2px; }
.cond {
  flex: 1;
  height: 28px;
  background: #dde3ea;
  color: #444;
  font-weight: 500;
  line-height: 30px;
  padding-left: 10px;
  white-space: pre;
  letter-spacing: .035px;
}
.addon3 {
  width: 94px;
  height: 28px;
  background: #404040;
  display: flex;
  align-items: center;
  justify-content: space-around;
  padding: 0 1px;
  flex: none;
}
.i-add { width: 12px; height: 12px; }
.tools {
  width: 56px;
  display: flex;
  padding: 5px 0 0 5px;
  gap: 3px;
  flex: none;
}
.i-tool { width: 13px; height: 15px; }
.i-paste { margin-left: 1px; }
.i-rm { display: block; fill: currentColor; width: 14px; height: 14px; margin-top: 1px; flex: none; }

.sec { display: flex; }
.sec-alors { height: 223px; padding-top: 2px; }
.sec-sinon { height: 222px; padding-top: 3px; background: #3b5163; }
.sec-side { width: 125px; flex: none; }
.sec-body { flex: 1; display: flex; flex-direction: column; gap: 4px; }
.word {
  font-size: 17.500px;
  line-height: 20px;
  text-align: right;
  padding-right: 17px;
  height: 20px;
}
.word-sinon { padding: 4px 19px 0 0; height: 24px; }
.btns { display: flex; justify-content: flex-end; gap: 3px; padding-right: 17px; margin-top: 3px; }
.btns-sinon { justify-content: flex-start; padding: 0 0 0 5px; }
.btn {
  height: 22px;
  background: #404040;
  display: flex;
  align-items: center;
  justify-content: center;
  font-size: 12px;
  font-weight: 500;
}
.btn-tog { width: 25px; }
.btn-add { width: 75px; }
.btn-add-s { width: 73px; }
.i-plus { width: 11px; height: 11px; margin-right: 2px; }

.block {
  height: 106px;
  background: #4a6375;
  border-top: 2px dotted #161616;
  border-bottom: 2px dotted #161616;
  border-left: 4px solid #1f1f1f;
  padding-top: 2px;
}
.block-sel { border-left-color: #dde3ea; }
.row-then { display: flex; margin-top: 7px; height: 65px; }
.then-side { width: 125px; flex: none; }
.action {
  width: 1044px;
  height: 64px;
  background: #91857f;
  padding-top: 2px;
  flex: none;
}
.a-row { display: flex; height: 28px; }
.a-row2 { margin-top: 2px; padding-left: 435px; }
.a-left {
  width: 87px;
  display: flex;
  align-items: flex-start;
  padding: 3px 0 0 3px;
  flex: none;
}
.i-grip-a { margin: 0; }
.chk-a { margin-left: 9px; }
.chk-off { margin-left: 5px; }
.a-rm {
  width: 31px;
  background: #404040;
  display: flex;
  align-items: center;
  justify-content: center;
  flex: none;
}
.i-rm-a { width: 13px; height: 13px; }
.a-name, .sel, .tags {
  background: #e7e7ec;
  color: #4b4b4b;
  font-weight: 500;
  line-height: 30px;
  padding-left: 10px;
}
.a-name { width: 251px; flex: none; }
.addon2 {
  width: 63px;
  background: #404040;
  display: flex;
  align-items: center;
  justify-content: space-around;
  margin-right: 3px;
  flex: none;
}
.lbl {
  background: #5a5a5a;
  color: #eee;
  text-align: center;
  line-height: 30px;
  font-weight: 500;
  flex: none;
}
.lbl-sc { width: 72px; }
.lbl-ac { width: 59px; }
.lbl-tags { width: 100px; }
.sel { position: relative; flex: none; white-space: nowrap; letter-spacing: .04px; }
.sel-sc { width: 326px; padding-left: 11px; }
.sel-ac { width: 152px; padding-left: 12px; }
.tags { flex: 1; position: relative; color: #9a9a9a; }
.resize {
  position: absolute;
  right: 0;
  bottom: 0;
  width: 9px;
  height: 9px;
  background: linear-gradient(135deg, transparent 50%, #555 50%, #555 58%, transparent 58%, transparent 72%, #555 72%, #555 80%, transparent 80%);
}
.shade {
  height: 15px;
  background: linear-gradient(#a9a9a9, #e0e0e2);
}
```
